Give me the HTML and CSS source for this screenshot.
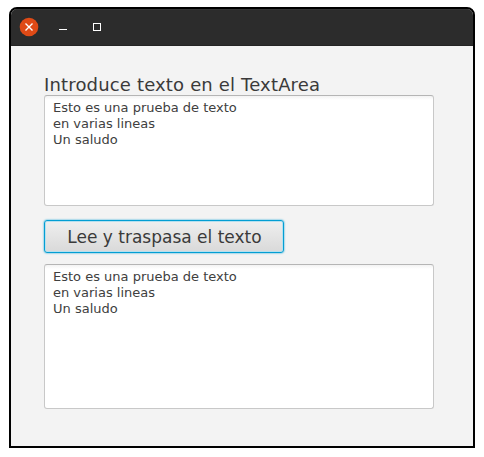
FILE: index.html
```html
<!DOCTYPE html>
<html lang="es">
<head>
<meta charset="utf-8">
<title>TextArea</title>
<link rel="stylesheet" href="styles.css">
</head>
<body>
<div class="window">
  <header class="titlebar">
    <svg class="controls" width="96" height="20" viewBox="0 0 96 20">
      <circle cx="10" cy="10" r="9.3" fill="#df4a16"/>
      <path d="M6.5 6.5l7 7M13.5 6.5l-7 7" stroke="#fff" stroke-width="1.4" fill="none"/>
      <path d="M40 12.5h8" stroke="#fff"/>
      <rect x="74.5" y="6.5" width="7" height="7" fill="none" stroke="#fff"/>
    </svg>
  </header>
  <main class="content">
    <div class="label">Introduce texto en el TextArea</div>
    <div class="area area-top">Esto es una prueba de texto
en varias lineas
Un saludo</div>
    <button class="button">Lee y traspasa el texto</button>
    <div class="area area-bottom">Esto es una prueba de texto
en varias lineas
Un saludo</div>
  </main>
</div>
</body>
</html>
```
FILE: styles.css
```css
* { box-sizing: border-box; }
body {
  margin: 0;
  padding: 7px 9px 9px;
  background: #fff;
  font-family: "DejaVu Sans", sans-serif;
}
.window {
  width: 466px;
  height: 441px;
  border: 2px solid #000;
  border-radius: 8px 8px 0 0;
  background: #f3f3f3;
  overflow: hidden;
}
.titlebar {
  height: 37px;
  padding: 8px 0 0 8px;
  background: #2c2c2c;
  box-shadow: inset 0 1px #363636, inset 0 -1px #242424;
}
.controls { display: block; }
.content {
  display: flex;
  flex-direction: column;
  align-items: flex-start;
  padding: 28px 33px 0;
}
.label {
  height: 21px;
  line-height: 21px;
  font-size: 18px;
  letter-spacing: 0.16px;
  color: #3a3a3a;
  white-space: nowrap;
}
.area {
  width: 390px;
  padding: 4px 8px;
  border: 1px solid #c8c8c8;
  border-top-color: #b5b5b5;
  border-radius: 3px;
  background: linear-gradient(#f3f3f3, #fff 4px);
  font-size: 13px;
  line-height: 16px;
  color: #404040;
  white-space: pre;
}
.area-top { height: 111px; }
.area-bottom { height: 145px; }
.button {
  width: 240px;
  height: 33px;
  margin: 14px 0 11px;
  padding: 2px 0 0 1px;
  border: 1px solid #039ed3;
  border-radius: 3px;
  background: linear-gradient(#efefef, #d9d9d9);
  box-shadow: inset 0 0 0 1px #b5e0ef, 0 0 2px #039ed3;
  font: 17px/29px "DejaVu Sans", sans-serif;
  color: #3a3a3a;
}
```
